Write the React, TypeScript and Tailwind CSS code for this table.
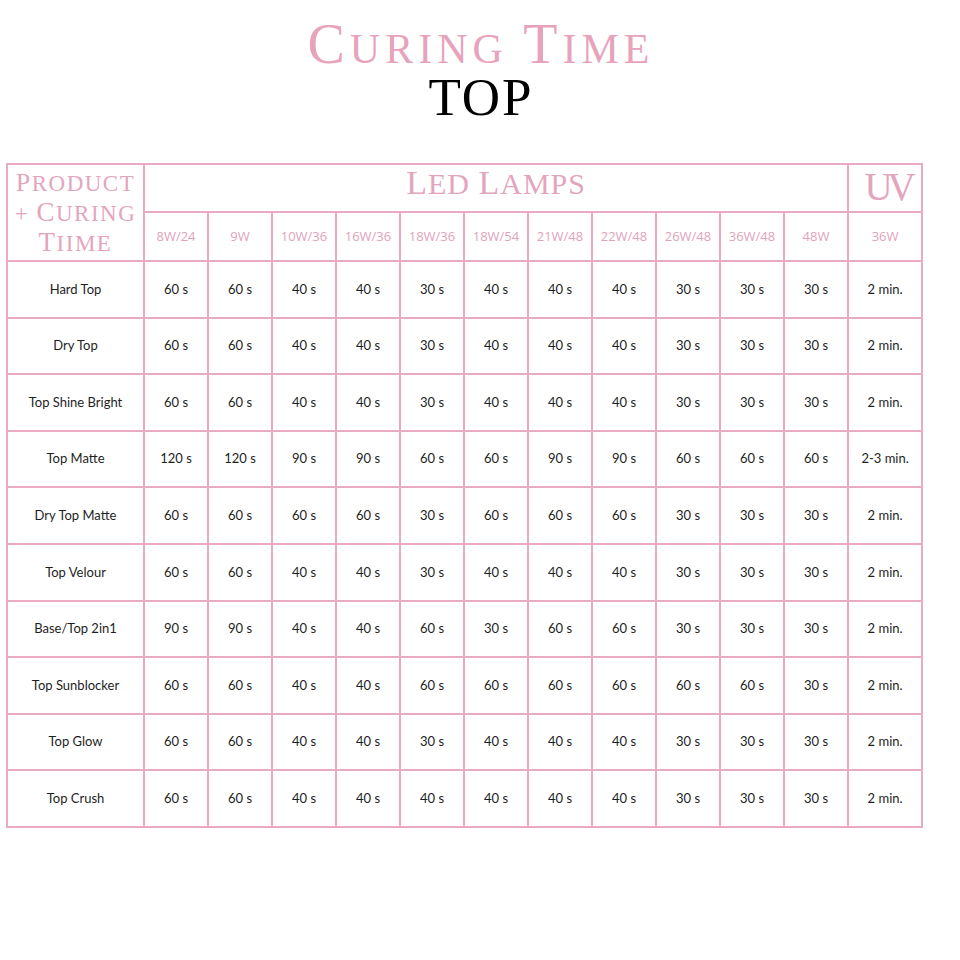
import React from "react";

const cols = ["8W/24", "9W", "10W/36", "16W/36", "18W/36", "18W/54", "21W/48", "22W/48", "26W/48", "36W/48", "48W"];

const rows: [string, string[], string][] = [
  ["Hard Top", ["60 s", "60 s", "40 s", "40 s", "30 s", "40 s", "40 s", "40 s", "30 s", "30 s", "30 s"], "2 min."],
  ["Dry Top", ["60 s", "60 s", "40 s", "40 s", "30 s", "40 s", "40 s", "40 s", "30 s", "30 s", "30 s"], "2 min."],
  ["Top Shine Bright", ["60 s", "60 s", "40 s", "40 s", "30 s", "40 s", "40 s", "40 s", "30 s", "30 s", "30 s"], "2 min."],
  ["Top Matte", ["120 s", "120 s", "90 s", "90 s", "60 s", "60 s", "90 s", "90 s", "60 s", "60 s", "60 s"], "2-3 min."],
  ["Dry Top Matte", ["60 s", "60 s", "60 s", "60 s", "30 s", "60 s", "60 s", "60 s", "30 s", "30 s", "30 s"], "2 min."],
  ["Top Velour", ["60 s", "60 s", "40 s", "40 s", "30 s", "40 s", "40 s", "40 s", "30 s", "30 s", "30 s"], "2 min."],
  ["Base/Top 2in1", ["90 s", "90 s", "40 s", "40 s", "60 s", "30 s", "60 s", "60 s", "30 s", "30 s", "30 s"], "2 min."],
  ["Top Sunblocker", ["60 s", "60 s", "40 s", "40 s", "60 s", "60 s", "60 s", "60 s", "60 s", "60 s", "30 s"], "2 min."],
  ["Top Glow", ["60 s", "60 s", "40 s", "40 s", "30 s", "40 s", "40 s", "40 s", "30 s", "30 s", "30 s"], "2 min."],
  ["Top Crush", ["60 s", "60 s", "40 s", "40 s", "40 s", "40 s", "40 s", "40 s", "30 s", "30 s", "30 s"], "2 min."],
];

const serif = "[font-family:'Liberation_Serif','DejaVu_Serif',serif]";
const cell = "border-2 border-[#eaaac3] text-center align-middle";

export default function App() {
  return (
    <div className="w-[960px] h-[960px] bg-white relative overflow-hidden">
      <div className={`flex flex-col items-center pt-[16px] ${serif}`}>
        <div className="text-[#e8a3bc] leading-[56px] h-[56px] tracking-[5px] pl-[2px] whitespace-nowrap">
          <span className="text-[56px]">C</span>
          <span className="text-[42px]">URING</span>
          <span className="text-[42px]"> </span>
          <span className="text-[56px]">T</span>
          <span className="text-[42px]">IME</span>
        </div>
        <div className="text-black text-[53px] leading-[53px] h-[53px] tracking-[2px] pl-[2px] -mt-[1px]">
          TOP
        </div>
      </div>
      <div className="pl-[6px] pt-[39px]">
        <table className="border-collapse table-fixed w-[915px] [font-family:Lato,'Liberation_Sans',sans-serif]">
          <colgroup>
            <col className="w-[137px]" />
            {cols.map((c) => (
              <col key={c} className="w-[64px]" />
            ))}
            <col className="w-[74px]" />
          </colgroup>
          <thead>
            <tr className="h-[48px]">
              <td rowSpan={2} className={`${cell} text-[#e3a5be] ${serif}`}>
                <div className="flex flex-col items-center leading-[27px] tracking-[1.5px] whitespace-nowrap pt-[3px]">
                  <div>
                    <span className="text-[26px]">P</span>
                    <span className="text-[23px]">RODUCT</span>
                  </div>
                  <div>
                    <span className="text-[23px]">+ </span>
                    <span className="text-[27px]">C</span>
                    <span className="text-[23px]">URING</span>
                  </div>
                  <div>
                    <span className="text-[27px]">T</span>
                    <span className="text-[23px]">IIME</span>
                  </div>
                </div>
              </td>
              <td colSpan={11} className={`${cell} text-[#e3a5be] ${serif}`}>
                <div className="-mt-[5px] leading-[40px] tracking-[1px] whitespace-nowrap">
                  <span className="text-[34px]">L</span>
                  <span className="text-[30px]">ED </span>
                  <span className="text-[34px]">L</span>
                  <span className="text-[30px]">AMPS</span>
                </div>
              </td>
              <td className={`${cell} text-[#e3a5be] ${serif}`}>
                <div className="text-[39px] leading-[40px] tracking-[-5px] mr-[-5px] -mt-[3px]">UV</div>
              </td>
            </tr>
            <tr className="h-[49px]">
              {cols.map((c) => (
                <td
                  key={c}
                  className={`${cell} text-[#e0a3bb] text-[13px] [font-family:'Open_Sans','Noto_Sans',sans-serif]`}
                >
                  {c}
                </td>
              ))}
              <td className={`${cell} text-[#e0a3bb] text-[13px] [font-family:'Open_Sans','Noto_Sans',sans-serif]`}>
                36W
              </td>
            </tr>
          </thead>
          <tbody>
            {rows.map(([name, vals, uv]) => (
              <tr key={name} className="h-[56.6px]">
                <td className={`${cell} text-[13px] text-[#1e1e1e]`}>{name}</td>
                {vals.map((v, i) => (
                  <td key={i} className={`${cell} text-[13px] text-[#1e1e1e]`}>
                    {v}
                  </td>
                ))}
                <td className={`${cell} text-[13px] text-[#1e1e1e]`}>{uv}</td>
              </tr>
            ))}
          </tbody>
        </table>
      </div>
    </div>
  );
}
